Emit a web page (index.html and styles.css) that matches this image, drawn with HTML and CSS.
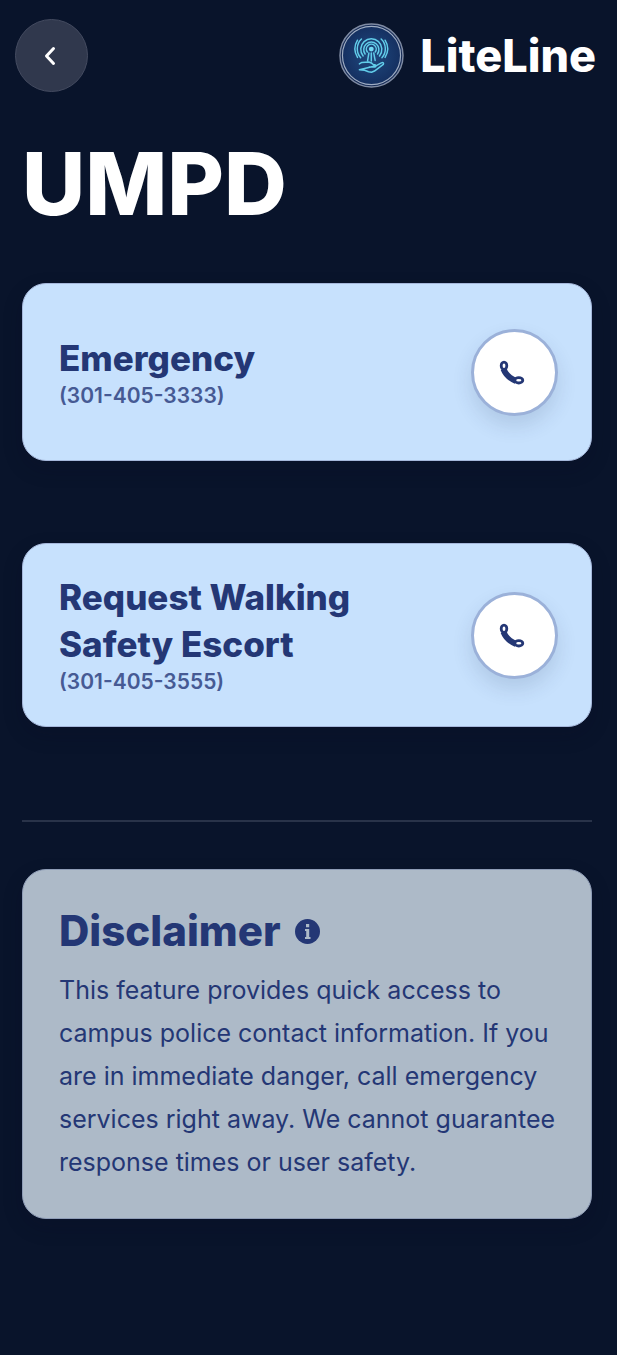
FILE: index.html
```html
<!DOCTYPE html>
<html lang="en">
<head>
    <meta charset="UTF-8">
    <meta name="viewport" content="width=device-width, initial-scale=1">
    <title>LiteLine</title>
    <link rel="stylesheet" href="styles.css">
</head>
<body>
<header class="header">
    <button class="back" type="button" aria-label="Back">
        <svg width="12" height="20" viewBox="0 0 12 20"><path d="M9.500 2.500L2.500 10l7 7.500" fill="none" stroke="#fff" stroke-width="3" stroke-linecap="round" stroke-linejoin="round"/></svg>
    </button>
    <div class="brand">
        <svg class="logo" viewBox="0 0 66 66">
            <defs>
                <radialGradient id="glow">
                    <stop offset="0" stop-color="#204a80"/>
                    <stop offset="1" stop-color="#153061"/>
                </radialGradient>
            </defs>
            <circle cx="33" cy="33" r="32" fill="#162b56" stroke="#7f8ba3" stroke-width="1.500"/>
            <circle cx="33" cy="33" r="29.500" fill="url(#glow)" stroke="#9eacc2" stroke-width="1.200"/>
            <g fill="none" stroke="#62cdea" stroke-width="1.500" stroke-linecap="round" stroke-linejoin="round">
                <path d="M28.800 29.500a5 5 0 1 1 8 0"/>
                <path d="M26.500 31.500a7.700 7.700 0 1 1 12.600 0"/>
                <path d="M24.500 33.500a10.700 10.700 0 1 1 16.600 0"/>
                <path d="M22 35.300a13.700 13.700 0 0 1 .8-19M43.600 35.300a13.700 13.700 0 0 0-.8-19"/>
                <path d="M18.800 35a16.700 16.700 0 0 1 0-17.500M46.800 35a16.700 16.700 0 0 0 0-17.500"/>
                <path d="M30.300 30.500L29 38.500M35.300 30.500l1.400 7.500M32.800 30.500v8"/>
                <path d="M20.700 41.500l2.500-1.500 7-.5q3 .5 5 3h1.500q1.500 1 0 2.200h-6M37.500 43.500l5.500-3q3-1 2 1.500L36 48.800l-3 1.200-3-.5-4-1.500-5.300-.5z"/>
            </g>
            <circle cx="32.800" cy="26.500" r="2.500" fill="#73daf3"/>
        </svg>
        <span class="brand-name">LiteLine</span>
    </div>
</header>
<main class="main">
    <h1 class="title">UMPD</h1>
    <section class="card contact">
        <div>
            <h2 class="contact-name">Emergency</h2>
            <p class="contact-phone">(301-405-3333)</p>
        </div>
        <a class="call" href="tel:3014053333" aria-label="Call Emergency">
            <svg width="28" height="28" viewBox="0 0 28 28"><use href="#phone"/></svg>
        </a>
    </section>
    <section class="card contact">
        <div>
            <h2 class="contact-name">Request Walking Safety Escort</h2>
            <p class="contact-phone">(301-405-3555)</p>
        </div>
        <a class="call" href="tel:3014053555" aria-label="Call Walking Safety Escort">
            <svg width="28" height="28" viewBox="0 0 28 28"><use href="#phone"/></svg>
        </a>
    </section>
    <hr class="line">
    <section class="card disclaimer">
        <h2 class="disclaimer-title">Disclaimer
            <svg width="25" height="25" viewBox="0 0 25 25"><circle cx="12.500" cy="12.500" r="12.500" fill="#243775"/><path d="M10 10h4.200v8h1.300v2H10v-2h1.200v-6H10zM11 5h3.200v3.200H11z" fill="#adbac8"/></svg>
        </h2>
        <p class="disclaimer-text">This feature provides quick access to campus police contact information. If you are in immediate danger, call emergency services right away. We cannot guarantee response times or user safety.</p>
    </section>
</main>
<svg class="symbols" width="0" height="0">
    <symbol id="phone" viewBox="0 0 28 28">
        <path d="M5.500 11q3 8 12.500 12" fill="none" stroke="#243775" stroke-width="6"/>
        <ellipse cx="6" cy="7.800" rx="2.800" ry="3.700" fill="#fff" stroke="#243775" stroke-width="2.800"/>
        <ellipse cx="20.800" cy="22.300" rx="4" ry="2.700" fill="#fff" stroke="#243775" stroke-width="2.800"/>
    </symbol>
</svg>
</body>
</html>
```

FILE: styles.css
```css
*{box-sizing:border-box;}
body{
    margin:0;
    background:#09142b;
    color:#fff;
    font-family:Inter,"Liberation Sans",sans-serif;
}
h1,h2,p{margin:0;}
svg{display:block;flex:none;}
.symbols{position:absolute;}
.header{
    display:flex;
    align-items:center;
    justify-content:space-between;
    padding:19px 21px 0 15px;
}
.back{
    display:flex;
    align-items:center;
    justify-content:center;
    width:73px;
    height:73px;
    padding:0 4px 0 0;
    border:1px solid #444b60;
    border-radius:50%;
    background:#30384d;
}
.brand{display:flex;align-items:center;gap:16px;}
.logo{width:65px;height:65px;}
.brand-name{font-size:45px;line-height:52px;font-weight:800;}
.main{padding:40px 25px 136px 22px;}
.title{
    margin-bottom:48px;
    font-size:87px;
    line-height:103px;
    font-weight:800;
}
.card{
    border:1px solid #a5b7da;
    border-radius:24px;
    background:#c7e1fd;
    color:#243775;
    box-shadow:0 8px 20px rgba(8,12,36,.2);
}
.contact{
    display:flex;
    align-items:center;
    justify-content:space-between;
    gap:24px;
    min-height:178px;
    margin-bottom:82px;
    padding:30px 33px 30px 36px;
}
.contact-name{font-size:35px;line-height:47px;font-weight:800;}
.contact-phone{
    font-size:21px;
    line-height:28px;
    font-weight:600;
    color:#465a94;
}
.call{
    display:flex;
    align-items:center;
    justify-content:center;
    flex:none;
    width:87px;
    height:87px;
    padding-right:6px;
    border:3px solid #9bb1d9;
    border-radius:50%;
    background:#fff;
    box-shadow:0 10px 20px rgba(36,55,90,.14);
}
.line{
    height:2px;
    margin:93px 0 47px;
    border:0;
    background:#293349;
}
.disclaimer{
    padding:35px 24px 34px 36px;
    border-color:#8e9cb6;
    background:#adbac8;
}
.disclaimer-title{
    display:flex;
    align-items:center;
    gap:14px;
    font-size:42px;
    line-height:52px;
    font-weight:800;
}
.disclaimer-text{
    margin-top:12px;
    font-size:25px;
    line-height:43px;
}
```
